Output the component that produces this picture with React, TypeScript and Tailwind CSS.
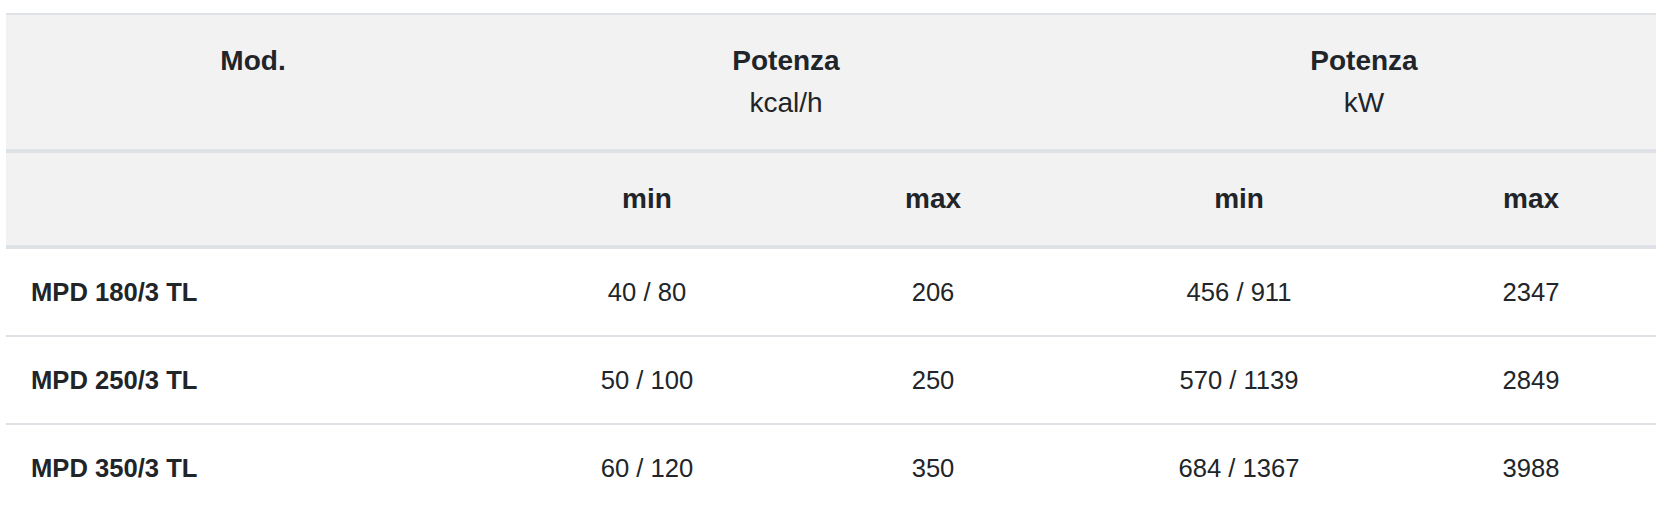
import React from "react";

const rows = [
  ["MPD 180/3 TL", "40 / 80", "206", "456 / 911", "2347"],
  ["MPD 250/3 TL", "50 / 100", "250", "570 / 1139", "2849"],
  ["MPD 350/3 TL", "60 / 120", "350", "684 / 1367", "3988"],
];

export default function App() {
  return (
    <div
      className="w-[1668px] h-[520px] bg-white pt-[13px] pl-[6px] text-[#212529]"
      style={{ fontFamily: '"Liberation Sans", Arial, Helvetica, sans-serif' }}
    >
      <table className="w-[1650px] table-fixed border-separate border-spacing-0">
        <colgroup>
          <col className="w-[494px]" />
          <col className="w-[294px]" />
          <col className="w-[278px]" />
          <col className="w-[334px]" />
          <col className="w-[250px]" />
        </colgroup>
        <thead>
          <tr className="bg-[#f2f2f2]">
            <th className="align-top text-center font-bold text-[28px] leading-[42px] pt-[25px] pb-[25px] border-t-2 border-b-4 border-[#dee2e6]">
              Mod.
            </th>
            <th
              colSpan={2}
              className="align-top text-center text-[28px] leading-[42px] pt-[25px] pb-[25px] border-t-2 border-b-4 border-[#dee2e6]"
            >
              <div className="font-bold">Potenza</div>
              <div className="font-normal">kcal/h</div>
            </th>
            <th
              colSpan={2}
              className="align-top text-center text-[28px] leading-[42px] pt-[25px] pb-[25px] border-t-2 border-b-4 border-[#dee2e6]"
            >
              <div className="font-bold">Potenza</div>
              <div className="font-normal">kW</div>
            </th>
          </tr>
          <tr className="bg-[#f2f2f2]">
            <th className="border-b-4 border-[#dee2e6] text-[28px] leading-[42px] pt-[25px] pb-[25px]"></th>
            <th className="border-b-4 border-[#dee2e6] text-center font-bold text-[28px] leading-[42px] pt-[25px] pb-[25px]">
              min
            </th>
            <th className="border-b-4 border-[#dee2e6] text-center font-bold text-[28px] leading-[42px] pt-[25px] pb-[25px]">
              max
            </th>
            <th className="border-b-4 border-[#dee2e6] text-center font-bold text-[28px] leading-[42px] pt-[25px] pb-[25px]">
              min
            </th>
            <th className="border-b-4 border-[#dee2e6] text-center font-bold text-[28px] leading-[42px] pt-[25px] pb-[25px]">
              max
            </th>
          </tr>
        </thead>
        <tbody>
          {rows.map((r, i) => {
            const b = i < rows.length - 1 ? "border-b-2 border-[#dee2e6]" : "";
            return (
              <tr key={i}>
                <td className={`pl-[25px] text-left font-bold text-[25.6px] leading-[38px] py-[24px] ${b}`}>
                  {r[0]}
                </td>
                {r.slice(1).map((v, j) => (
                  <td
                    key={j}
                    className={`text-center text-[25.6px] leading-[38px] py-[24px] ${b}`}
                  >
                    {v}
                  </td>
                ))}
              </tr>
            );
          })}
        </tbody>
      </table>
    </div>
  );
}
